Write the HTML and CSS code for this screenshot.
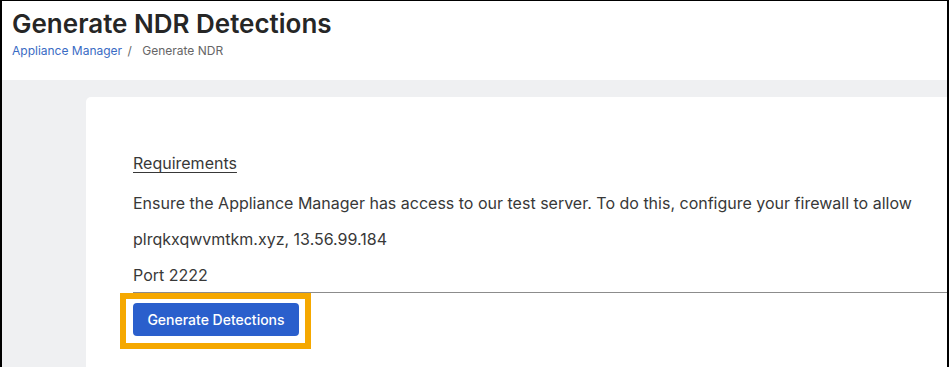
FILE: index.html
```html
<!DOCTYPE html>
<html lang="en">
<head>
    <meta charset="UTF-8">
    <meta name="viewport" content="width=device-width, initial-scale=1.0">
    <title>Generate NDR Detections</title>
    <link rel="stylesheet" href="styles.css">
</head>
<body>
    <div class="frame">
        <header class="page-header">
            <h1>Generate NDR Detections</h1>
            <nav class="breadcrumb">
                <a href="#">Appliance Manager</a>
                <span class="sep">/</span>
                <span class="current">Generate NDR</span>
            </nav>
        </header>
        <main class="content">
            <section class="card">
                <p class="req-title">Requirements</p>
                <p class="req-text">Ensure the Appliance Manager has access to our test server. To do this, configure your firewall to allow</p>
                <p class="req-text">plrqkxqwvmtkm.xyz, 13.56.99.184</p>
                <p class="req-text">Port 2222</p>
                <hr class="divider">
                <div class="highlight">
                    <button class="btn-primary">Generate Detections</button>
                </div>
            </section>
        </main>
    </div>
</body>
</html>
```

FILE: styles.css
```css
html, body {
    margin: 0;
    padding: 0;
    height: 100%;
}

body {
    font-family: Inter, "Noto Sans", sans-serif;
    color: #333;
    background-color: #fff;
    overflow: hidden;
}

.frame {
    box-sizing: border-box;
    height: 100%;
    border-top: 1px solid #000;
    border-left: 2px solid #000;
    border-right: 2px solid #000;
    display: flex;
    flex-direction: column;
}

.page-header {
    background-color: #fff;
    height: 79px;
    padding-left: 10px;
    box-sizing: border-box;
}

.page-header h1 {
    margin: 0;
    padding-top: 7px;
    font-size: 26px;
    line-height: 32px;
    font-weight: 600;
    color: #262626;
}

.breadcrumb {
    font-size: 12px;
    line-height: 18px;
    margin-top: 2px;
}

.breadcrumb a {
    color: #3a6bc4;
    text-decoration: none;
}

.breadcrumb .sep {
    color: #666;
    margin: 0 7px 0 2px;
}

.breadcrumb .current {
    color: #666;
}

.content {
    flex: 1;
    background-color: #eff0f2;
    padding: 17px 0 0 84px;
}

.card {
    background-color: #fff;
    border-radius: 5px 0 0 0;
    height: 100%;
    padding: 54px 0 0 47px;
    box-sizing: border-box;
}

.card p {
    margin: 0;
    font-size: 16px;
    line-height: 24px;
    color: #383838;
}

.req-title {
    text-decoration: underline;
    text-underline-offset: 3px;
    margin-bottom: 16px !important;
}

.req-text + .req-text {
    margin-top: 12px !important;
}

.divider {
    border: none;
    border-top: 1px solid #8c8c8c;
    margin: 5px 0 0 0;
}

.highlight {
    display: inline-block;
    margin-left: -13px;
    border: 6px solid #f5a800;
    padding: 4px 6px 7px 7px;
}

.btn-primary {
    display: block;
    width: 166px;
    height: 33px;
    background-color: #2a5fcc;
    color: #fff;
    border: none;
    border-radius: 4px;
    font-family: Inter, "Noto Sans", sans-serif;
    font-size: 14px;
    font-weight: 500;
    cursor: pointer;
}
```
